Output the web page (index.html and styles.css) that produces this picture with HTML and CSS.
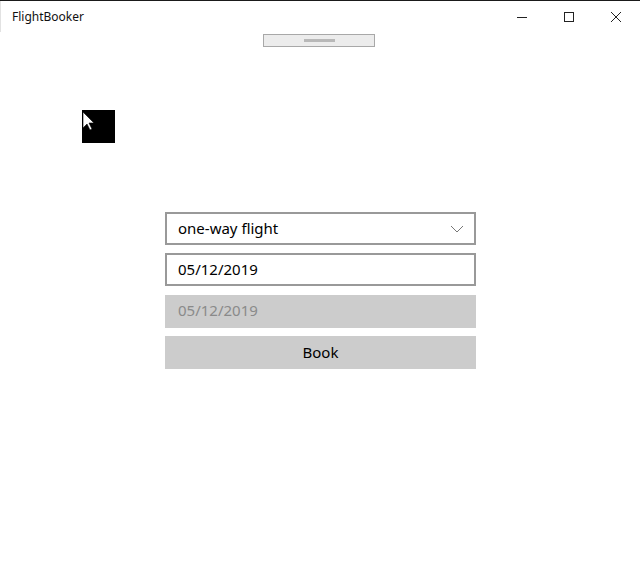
FILE: index.html
```html
<!DOCTYPE html>
<html>
<head>
<meta charset="utf-8">
<link rel="stylesheet" href="styles.css">
</head>
<body>
<div class="window">
  <div class="titlebar">
    <div class="title">FlightBooker</div>
    <div class="controls">
      <div class="ctl"><svg width="12" height="12" viewBox="0 0 12 12"><path d="M1 6.5h10" stroke="#222" stroke-width="1"/></svg></div>
      <div class="ctl"><svg width="12" height="12" viewBox="0 0 12 12"><rect x="1.5" y="1.5" width="9" height="9" fill="none" stroke="#222" stroke-width="1"/></svg></div>
      <div class="ctl"><svg width="12" height="12" viewBox="0 0 12 12"><path d="M1 1L11 11M11 1L1 11" stroke="#222" stroke-width="1"/></svg></div>
    </div>
  </div>
  <div class="handle-row"><div class="handle"><div class="grip"></div></div></div>
  <div class="cursor-box"><svg width="14" height="20" viewBox="0 0 14 20"><path d="M1 1V17L5 13L8 19L10 18L7 12H12Z" fill="#fff" stroke="#000" stroke-width="0.6"/></svg></div>
  <div class="form">
    <div class="field combo"><span>one-way flight</span><svg width="14" height="8" viewBox="0 0 14 8"><path d="M1 1L7 7L13 1" fill="none" stroke="#777" stroke-width="1"/></svg></div>
    <div class="field text">05/12/2019</div>
    <div class="field disabled">05/12/2019</div>
    <div class="field button">Book</div>
  </div>
</div>
</body>
</html>
```
FILE: styles.css
```css
html, body { margin: 0; padding: 0; background: #fff; }
body { font-family: "Noto Sans", "Open Sans", sans-serif; color: #000; }
.window { position: relative; width: 640px; height: 576px; border-top: 1px solid #1a1a1a; box-sizing: border-box; }
.titlebar { display: flex; justify-content: space-between; align-items: center; height: 31px; border-left: 1px solid #e2e2e2; }
.title { font-size: 12px; padding-left: 11px; color: #111; padding-bottom: 1px; }
.controls { display: flex; }
.ctl { width: 47px; height: 31px; display: flex; align-items: center; justify-content: center; }
.ctl:last-child { width: 48px; }
.handle-row { display: flex; justify-content: center; padding-right: 2px; }
.handle { width: 110px; height: 11px; background: #ececec; border: 1px solid #a8a8a8; display: flex; align-items: center; justify-content: center; margin-top: 2px; }
.grip { width: 31px; height: 3px; background: #b8b8b8; }
.cursor-box { position: absolute; left: 82px; top: 109px; width: 33px; height: 33px; background: #000; }
.cursor-box svg { display: block; margin: 1px 0 0 0; }
.form { margin: 165px 0 0 165px; width: 311px; display: flex; flex-direction: column; gap: 9px; }
.field { height: 33px; box-sizing: border-box; font-size: 15px; display: flex; align-items: center; padding-bottom: 2px; }
.combo, .text { border: 2px solid #999; padding: 0 10px 2px 11px; }
.combo { justify-content: space-between; margin-bottom: -1px; }
.combo svg { margin-top: 2px; }
.disabled { background: #ccc; color: #8a8a8a; padding-left: 13px; padding-bottom: 3px; }
.button { background: #ccc; justify-content: center; margin-top: -1px; }
```
